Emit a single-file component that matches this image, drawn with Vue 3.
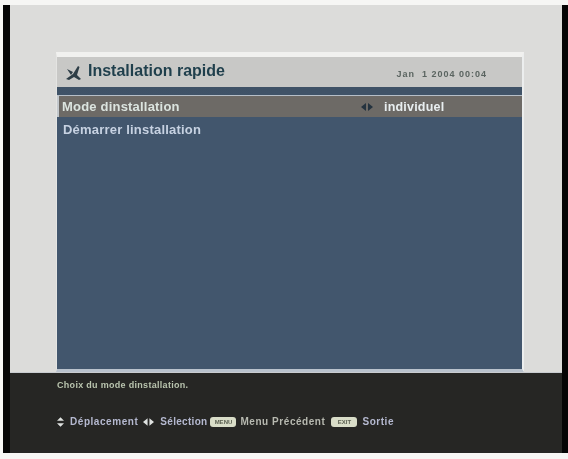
<script setup>
const title = 'Installation rapide'
</script>

<template>
  <div class="screen">
    <div class="frame">
      <div class="stage">
        <section class="panel">
          <header class="head">
            <div class="head-left">
              <svg class="sat" viewBox="0 0 18 16" width="18" height="16">
                <path d="M1 14 L8 9 L13 1 L14.5 2 L12 10 L16 14 L14 15 L9 12 L4 15 Z" fill="#2d3d46" />
                <path d="M2 4 L8 7 L6 10 Z" fill="#2d3d46" />
              </svg>
              <span class="title">{{ title }}</span>
            </div>
            <span class="clock">Jan&nbsp;&nbsp;1 2004 00:04</span>
          </header>
          <div class="body">
            <div class="row active">
              <span class="label">Mode dinstallation</span>
              <div class="value">
                <svg class="lr" viewBox="0 0 12 8" width="12" height="8">
                  <path d="M5 0 L0 4 L5 8 Z M7 0 L12 4 L7 8 Z" fill="#24333f" />
                </svg>
                <span>individuel</span>
              </div>
            </div>
            <div class="row second"><span class="label">Démarrer linstallation</span></div>
          </div>
        </section>
      </div>
      <footer class="foot">
        <p class="hint">Choix du mode dinstallation.</p>
        <div class="keys">
          <svg class="updown" viewBox="0 0 8 11" width="7" height="10"><path d="M4 0 L8 4 H0 Z M0 7 H8 L4 11 Z" fill="#dfe2e0" /></svg>
          <span class="k1">Déplacement</span>
          <svg class="leftright" viewBox="0 0 12 8" width="11" height="8"><path d="M5 0 L0 4 L5 8 Z M7 0 L12 4 L7 8 Z" fill="#dfe2e0" /></svg>
          <span class="k2">Sélection</span>
          <span class="pill">MENU</span>
          <span class="k3">Menu Précédent</span>
          <span class="pill">EXIT</span>
          <span class="k4">Sortie</span>
        </div>
      </footer>
    </div>
  </div>
</template>

<style>
html, body { margin: 0; background: #f6f6f4; }
</style>

<style scoped>
.screen {
  width: 568px;
  height: 459px;
  box-sizing: border-box;
  padding: 5px 0 0 3px;
  overflow: hidden;
  font-family: "Liberation Sans", Arial, sans-serif;
  filter: blur(0.45px);
}
.frame {
  height: 448px;
  display: flex;
  flex-direction: column;
  border-left: 7px solid #050505;
  border-right: 6px solid #050505;
}
.stage {
  height: 368px;
  flex: none;
  box-sizing: border-box;
  padding: 47px 38px 0 46px;
  background: #dcdcda;
  border-bottom: 1px solid #c9ccd0;
}
.panel {
  height: 320px;
  box-sizing: border-box;
  display: flex;
  flex-direction: column;
  background: #42566d;
  border-top: 5px solid #f1f1ef;
  border-right: 2px solid #eceeee;
  border-left: 1px solid #e4e4e2;
  border-bottom: 3px solid #b9c2cd;
}
.head {
  height: 30px;
  flex: none;
  box-sizing: border-box;
  padding: 0 35px 0 8px;
  display: flex;
  align-items: center;
  justify-content: space-between;
  background: #c8c8c6;
}
.head-left { display: flex; align-items: center; gap: 5px; }
.sat { margin-top: 2px; }
.title {
  font-size: 16px;
  font-weight: 700;
  color: #1f3f4c;
  margin-top: -3px;
}
.clock {
  font-size: 9px;
  font-weight: 700;
  color: #5a6460;
  letter-spacing: 1px;
  margin-top: 4px;
}
.body { padding-top: 8px; background: linear-gradient(#3f5266 0, #42566d 30px); flex: 1; }
.row {
  height: 22px;
  box-sizing: border-box;
  padding-left: 6px;
  display: flex;
  align-items: center;
  font-size: 13px;
  font-weight: 700;
  color: #c7d2e2;
  letter-spacing: 0.2px;
}
.second { height: 24px; }
.label { flex: none; }
.active {
  background: #6d6a66;
  border-top: 1px solid #b6bfc8;
  border-left: 2px solid #c3c8cc;
  padding-left: 3px;
  color: #dbe4df;
}
.value {
  margin-left: auto;
  width: 161px;
  flex: none;
  display: flex;
  align-items: center;
  gap: 11px;
  font-size: 12.5px;
  color: #e8eef0;
}
.foot {
  flex: 1;
  box-sizing: border-box;
  padding: 7px 0 0 47px;
  background: #262624;
}
.hint {
  margin: 0;
  font-size: 9px;
  font-weight: 700;
  color: #b9c4ae;
  letter-spacing: 0.3px;
}
.keys {
  margin-top: 26px;
  display: flex;
  align-items: center;
  font-size: 10px;
  font-weight: 700;
  color: #b5b9d0;
  letter-spacing: 0.55px;
}
.k1 { margin-left: 6px; }
.leftright { margin-left: 5px; }
.k2 { margin-left: 6px; letter-spacing: 0.3px; }
.k3 { margin-left: 4px; margin-right: 3px; color: #b7b9b0; }
.k4 { margin-left: 5px; }
.pill {
  box-sizing: border-box;
  width: 26px;
  height: 10px;
  margin-left: 3px;
  border-radius: 3px;
  background: #d9ddc8;
  color: #5a5f50;
  font-size: 6px;
  line-height: 10px;
  letter-spacing: 0;
  text-align: center;
}
</style>
